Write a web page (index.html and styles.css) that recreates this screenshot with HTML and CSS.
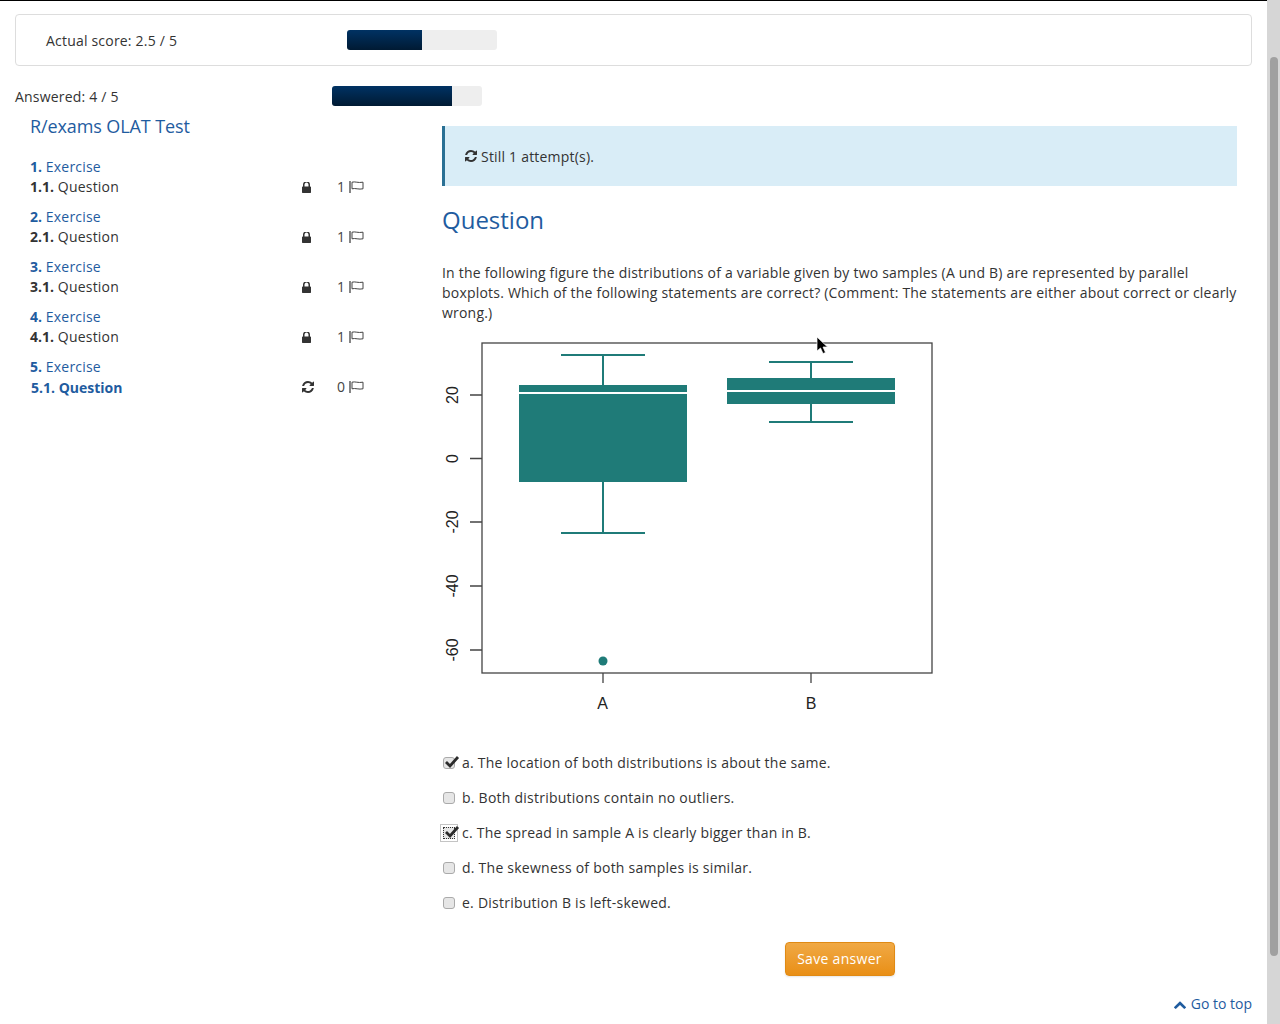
FILE: index.html
```html
<!DOCTYPE html>
<html lang="en">
<head>
<meta charset="utf-8">
<title>R/exams OLAT Test</title>
<link rel="stylesheet" href="styles.css">
</head>
<body>
<svg class="defs" width="0" height="0" aria-hidden="true">
  <symbol id="i-refresh" viewBox="128 128 1536 1536"><path d="M1639 1056q0 5-1 7-64 268-268 434.5t-478 166.5q-146 0-282.5-55t-243.5-157l-129 129q-19 19-45 19t-45-19-19-45v-448q0-26 19-45t45-19h448q26 0 45 19t19 45-19 45l-137 137q71 66 161 102t187 36q134 0 250-65t186-179q11-17 53-117 8-23 30-23h192q13 0 22.5 9.5t9.5 22.5zm25-800v448q0 26-19 45t-45 19h-448q-26 0-45-19t-19-45 19-45l138-138q-148-137-349-137-134 0-250 65t-186 179q-11 17-53 117-8 23-30 23h-199q-13 0-22.5-9.5t-9.5-22.5v-7q65-268 270-434.5t480-166.5q146 0 284 55.5t245 156.5l130-129q19-19 45-19t45 19 19 45z"/></symbol>
  <symbol id="i-lock" viewBox="320 256 1152 1280" preserveAspectRatio="none"><path d="M640 768h512v-192q0-106-75-181t-181-75-181 75-75 181v192zm832 96v576q0 40-28 68t-68 28h-960q-40 0-68-28t-28-68v-576q0-40 28-68t68-28h32v-192q0-184 132-316t316-132 316 132 132 316v192h32q40 0 68 28t28 68z"/></symbol>
  <symbol id="i-flag" viewBox="0 0 15 12"><path d="M1 0v12" fill="none" stroke="#333" stroke-width="1.2"/><path d="M3 1.2c3-1 6 1 11 0v6.600c-4 1-8-1-11 0z" fill="none" stroke="#444" stroke-width="1"/></symbol>
  <symbol id="i-check" viewBox="0 0 16 14"><path d="M2 7l4 4 8-9" fill="none" stroke="#2b2b2b" stroke-width="2.8"/></symbol>
  <symbol id="i-up" viewBox="90 280 1610 1240" preserveAspectRatio="none"><path d="M1683 1331l-166 165q-19 19-45 19t-45-19l-531-531-531 531q-19 19-45 19t-45-19l-166-165q-19-19-19-45.5t19-45.5l742-741q19-19 45-19t45 19l742 741q19 19 19 45.5t-19 45.5z"/></symbol>
</svg>
<div class="page">
  <div class="content">
    <section class="score-panel">
      <span class="score-label">Actual score: 2.5 / 5</span>
      <div class="bar"><div class="bar-fill" style="width:50%"></div></div>
    </section>
    <div class="answered">
      <span class="answered-label">Answered: 4 / 5</span>
      <div class="bar"><div class="bar-fill" style="width:80%"></div></div>
    </div>
    <div class="columns">
      <nav class="sidebar">
        <h2 class="test-title">R/exams OLAT Test</h2>
        <ul class="toc">
          <li class="toc-group">
            <div class="toc-section"><b>1.</b> Exercise</div>
            <div class="toc-item"><span class="toc-name"><b>1.1.</b> Question</span><svg class="toc-icon"><use href="#i-lock"/></svg><span class="toc-count">1</span><svg class="toc-flag"><use href="#i-flag"/></svg></div>
          </li>
          <li class="toc-group">
            <div class="toc-section"><b>2.</b> Exercise</div>
            <div class="toc-item"><span class="toc-name"><b>2.1.</b> Question</span><svg class="toc-icon"><use href="#i-lock"/></svg><span class="toc-count">1</span><svg class="toc-flag"><use href="#i-flag"/></svg></div>
          </li>
          <li class="toc-group">
            <div class="toc-section"><b>3.</b> Exercise</div>
            <div class="toc-item"><span class="toc-name"><b>3.1.</b> Question</span><svg class="toc-icon"><use href="#i-lock"/></svg><span class="toc-count">1</span><svg class="toc-flag"><use href="#i-flag"/></svg></div>
          </li>
          <li class="toc-group">
            <div class="toc-section"><b>4.</b> Exercise</div>
            <div class="toc-item"><span class="toc-name"><b>4.1.</b> Question</span><svg class="toc-icon"><use href="#i-lock"/></svg><span class="toc-count">1</span><svg class="toc-flag"><use href="#i-flag"/></svg></div>
          </li>
          <li class="toc-group">
            <div class="toc-section"><b>5.</b> Exercise</div>
            <div class="toc-item toc-active"><span class="toc-name">5.1. Question</span><svg class="toc-icon toc-icon-refresh"><use href="#i-refresh"/></svg><span class="toc-count">0</span><svg class="toc-flag"><use href="#i-flag"/></svg></div>
          </li>
        </ul>
      </nav>
      <main class="question">
        <div class="info-box"><svg class="info-icon"><use href="#i-refresh"/></svg><span class="info-text">Still 1 attempt(s).</span></div>
        <h1 class="question-title">Question</h1>
        <p class="question-text">In the following figure the distributions of a variable given by two samples (A und B) are represented by parallel boxplots. Which of the following statements are correct? (Comment: The statements are either about correct or clearly wrong.)</p>
        <svg class="plot" viewBox="440 335 500 390" width="500" height="390" role="img" aria-label="Parallel boxplots of samples A and B">
          <rect x="482" y="343" width="450" height="330" fill="none" stroke="#444" stroke-width="1.3"/>
          <g stroke="#444" stroke-width="1.3">
            <path d="M470 395h12M470 458.500h12M470 522h12M470 586h12M470 650h12M603 673v10M811 673v10" fill="none"/>
          </g>
          <g class="plot-axis-y">
            <text transform="translate(458 395) rotate(-90)">20</text>
            <text transform="translate(458 458.500) rotate(-90)">0</text>
            <text transform="translate(458 522) rotate(-90)">-20</text>
            <text transform="translate(458 586) rotate(-90)">-40</text>
            <text transform="translate(458 650) rotate(-90)">-60</text>
          </g>
          <text class="plot-axis-x" x="602.500" y="709">A</text>
          <text class="plot-axis-x" x="811" y="709">B</text>
          <g fill="#1f7b78" stroke="none">
            <rect x="519" y="385" width="168" height="97"/>
            <rect x="727" y="378" width="168" height="26"/>
            <circle cx="603" cy="661" r="4.500"/>
          </g>
          <path d="M519 393h168M727 391h168" stroke="#fff" stroke-width="2" fill="none"/>
          <path d="M603 355v30M603 482v51M561 355h84M561 533h84M811 362v16M811 404v18M769 362h84M769 422h84" stroke="#1f7b78" stroke-width="2" fill="none"/>
        </svg>
        <ul class="choices">
          <li class="choice"><span class="checkbox"><svg class="check"><use href="#i-check"/></svg></span><span>a. The location of both distributions is about the same.</span></li>
          <li class="choice"><span class="checkbox"></span><span>b. Both distributions contain no outliers.</span></li>
          <li class="choice"><span class="checkbox focused"><svg class="check"><use href="#i-check"/></svg></span><span>c. The spread in sample A is clearly bigger than in B.</span></li>
          <li class="choice"><span class="checkbox"></span><span>d. The skewness of both samples is similar.</span></li>
          <li class="choice"><span class="checkbox"></span><span>e. Distribution B is left-skewed.</span></li>
        </ul>
        <div class="actions"><button class="save-btn" type="button">Save answer</button></div>
      </main>
    </div>
    <div class="to-top"><svg class="up-icon"><use href="#i-up"/></svg>Go to top</div>
  </div>
  <div class="scrollbar"><div class="thumb"></div></div>
</div>
<svg class="cursor" width="14" height="20" viewBox="0 0 14 20" aria-hidden="true"><path d="M1 1v14l3.500-3 2.500 5.500 2.500-1-2.500-5.500h4.500z" fill="#000" stroke="#fff" stroke-width="0.7"/></svg>
</body>
</html>
```
FILE: styles.css
```css
* { box-sizing: border-box; }
html, body { margin: 0; height: 1024px; overflow: hidden; }
body {
  position: relative;
  font-family: "Open Sans", "Liberation Sans", sans-serif;
  font-size: 14px;
  line-height: 20px;
  letter-spacing: 0.2px;
  color: #333;
  background: #fff;
}
b { letter-spacing: 0; }
.defs { position: absolute; }
.page { display: flex; height: 1024px; }
.content { flex: 1; min-width: 0; border-top: 1px solid #000; padding: 13px 15px 0; }
.scrollbar { width: 13px; background: #d6d6d6; padding: 57px 2px 0 3px; }
.thumb { height: 899px; background: #a0a0a0; border-radius: 4px; }

.score-panel {
  display: flex;
  align-items: center;
  height: 52px;
  padding-left: 30px;
  border: 1px solid #ddd;
  border-radius: 4px;
}
.score-label { width: 301px; padding-top: 2px; }
.answered { display: flex; align-items: center; height: 20px; margin-top: 20px; }
.answered-label { width: 317px; padding-top: 2px; }
.bar { width: 150px; height: 20px; background: #eee; border-radius: 3px; overflow: hidden; }
.bar-fill { height: 100%; background: linear-gradient(#003263, #001a33); }

.columns { display: flex; margin-top: 10px; }
.sidebar { width: 427px; flex: none; padding-left: 15px; }
.test-title { margin: 0; font-size: 18px; font-weight: 400; line-height: 20px; letter-spacing: -0.1px; color: #1f5c9f; }
.toc { list-style: none; margin: 21px 0 0; padding: 0; }
.toc-group { margin-bottom: 10px; }
.toc-section { color: #1f5c9f; }
.toc-item { display: flex; align-items: center; height: 20px; }
.toc-name { width: 272px; flex: none; }
.toc-icon { width: 9px; height: 11px; fill: #333; flex: none; }
.toc-icon-refresh { width: 12px; height: 12px; }
.toc-count { margin-left: 26px; width: 12px; flex: none; color: #444; }
.toc-icon-refresh + .toc-count { margin-left: 23px; }
.toc-flag { width: 15px; height: 12px; flex: none; }
.toc-active { font-weight: 700; color: #1f5c9f; }
.toc-active .toc-name { padding: 2px 0 0 1px; letter-spacing: 0; }
.toc-active .toc-count { font-weight: 400; }

.question { width: 795px; flex: none; padding-top: 10px; }
.info-box {
  display: flex;
  align-items: center;
  height: 60px;
  padding-left: 20px;
  background: #d9edf7;
  border-left: 3px solid #2a7094;
}
.info-icon { width: 12px; height: 12px; fill: #333; margin-right: 4px; flex: none; }
.info-text { padding-top: 2px; }
.question-title { margin: 18px 0 0; font-size: 24px; font-weight: 400; line-height: 32px; letter-spacing: 0; color: #1f5c9f; }
.question-text { margin: 27px -5px 0 0; letter-spacing: 0.21px; }
.plot { display: block; margin: 12px 0 0 -2px; }
.plot-axis-y text { font-family: "Liberation Sans", sans-serif; font-size: 16px; letter-spacing: 0; text-anchor: middle; fill: #222; }
.plot-axis-x { font-family: "Liberation Sans", sans-serif; font-size: 16px; letter-spacing: 0; text-anchor: middle; fill: #222; }

.choices { list-style: none; margin: 28px 0 0; padding: 0; letter-spacing: 0.24px; }
.choice { display: flex; align-items: center; height: 20px; margin-bottom: 15px; padding-left: 1px; }
.checkbox {
  position: relative;
  width: 12px;
  height: 12px;
  margin-right: 7px;
  flex: none;
  background: #e6e6e6;
  border: 1px solid #aaa;
  border-radius: 3px;
}
.checkbox.focused { border: 1px dotted #333; border-radius: 0; outline: 1px solid #c4c4c4; outline-offset: 2px; }
.check { position: absolute; left: 0; top: -3px; width: 16px; height: 14px; }
.actions { margin-top: 29px; text-align: center; }
.save-btn {
  width: 110px;
  height: 34px;
  padding: 0;
  font: inherit;
  letter-spacing: 0.3px;
  color: #fff;
  background: linear-gradient(#f0a945, #e98f16);
  border: 1px solid #e08a14;
  border-radius: 4px;
  box-shadow: 0 1px 2px rgba(0, 0, 0, 0.1);
}
.to-top { margin-top: 18px; text-align: right; letter-spacing: 0; color: #1f5c9f; }
.up-icon { width: 12px; height: 9px; fill: #1f5c9f; margin-right: 5px; vertical-align: 0; }
.cursor { position: absolute; left: 816px; top: 336px; }
```
